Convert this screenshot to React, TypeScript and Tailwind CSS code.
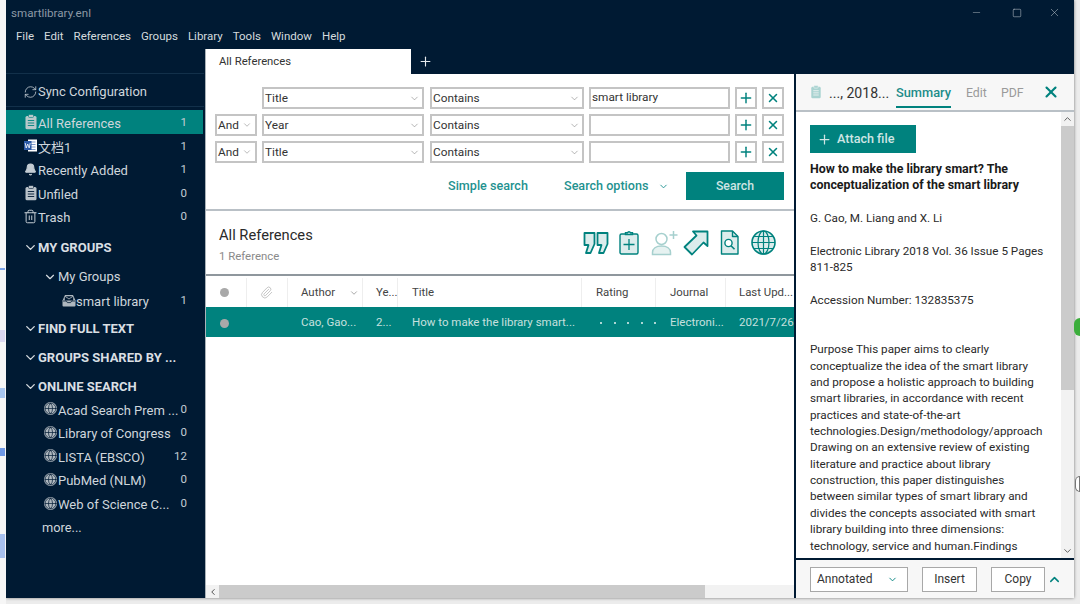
import React from "react";
import { RefreshCw, Bell, Trash2, Globe, ChevronDown, ChevronUp, ChevronLeft, Plus, X, Paperclip, Minus, Square } from "lucide-react";

const Clip = ({ c = "#b9c2c9", s = 14, line = "#001a33" }: { c?: string; s?: number; line?: string }) => (
  <svg width={s} height={s + 2} viewBox="0 0 14 16">
    <rect x="1.5" y="2" width="11" height="13.2" rx="1.5" fill={c} />
    <rect x="4.5" y="0.5" width="5" height="3" rx="1" fill={c} stroke={line} strokeWidth="0.6" />
    <path d="M3.8 6.5h6.4M3.8 9h6.4M3.8 11.5h6.4" stroke={line} strokeWidth="0.9" />
  </svg>
);

const WordIcon = () => (
  <svg width="13" height="13" viewBox="0 0 13 13">
    <rect x="4" y="0.5" width="9" height="12" fill="#fff" />
    <path d="M6.5 3h5M6.5 5.5h5M6.5 8h5M6.5 10.5h5" stroke="#6f8fc4" strokeWidth="0.9" />
    <rect x="0" y="2" width="7.5" height="9" fill="#2b5aa8" />
    <path d="M1.2 4l1 5 1.5-4 1.5 4 1-5" stroke="#fff" strokeWidth="0.8" fill="none" />
  </svg>
);

const TrayIcon = () => (
  <svg width="14" height="13" viewBox="0 0 14 13">
    <path d="M3 1h8l2.5 5.5V11.5a1 1 0 0 1-1 1h-11a1 1 0 0 1-1-1V6.5z" fill="#aeb7be" />
    <path d="M3 6.5V3l4 2.5L11 3v3.5" fill="#001a33" stroke="#001a33" strokeWidth="0.4" />
    <path d="M3.6 2.2h6.8L7 4.6z" fill="#001a33" />
    <path d="M1 7h3.4l1 1.6h3.2l1-1.6H13" fill="none" stroke="#001a33" strokeWidth="0.8" />
  </svg>
);

const Row = ({ icon, label, count, active, indent = 0 }: { icon?: React.ReactNode; label: string; count?: string; active?: boolean; indent?: number }) => (
  <div className={`flex items-center pr-[8px] ${active ? "bg-[#00827e] h-[24px]" : "h-[23.6px]"}`} style={{ paddingLeft: 17 + indent }}>
    <span className="w-[15px] flex justify-center shrink-0">{icon}</span>
    <span className="text-[#cfd6dc] text-[13px] whitespace-nowrap pt-[3px]">{label}</span>
    <span className="ml-auto pr-[8px] text-[#c3ccd3] text-[11.5px] pt-[1px]">{count}</span>
  </div>
);

const Head = ({ label, cls = "" }: { label: string; cls?: string }) => (
  <div className={`flex items-center h-[29px] pl-[17px] ${cls}`}>
    <ChevronDown size={15} strokeWidth={2.2} color="#d5dbe0" className="shrink-0" />
    <span className="text-[#d9dfe3] text-[13px] font-bold whitespace-nowrap">{label}</span>
  </div>
);

const G = () => (
  <span className="w-[13px] h-[13px] rounded-full bg-[#aeb7be] flex items-center justify-center">
    <Globe size={13} strokeWidth={1.3} color="#001a33" />
  </span>
);

const Select = ({ label, w, sm }: { label: string; w: string; sm?: boolean }) => (
  <div className={`${w} h-[22px] border-2 border-[#c4c4c4] flex items-center pl-[1px] text-[11.8px] text-[#333] shrink-0 bg-white`}>
    <span className="pt-[1px]">{label}</span>
    <ChevronDown size={sm ? 10 : 11} color="#777" strokeWidth={1.2} className={`ml-auto ${sm ? "mr-[3px]" : "mr-[2px]"}`} />
  </div>
);

const SearchRow = ({ first, field, value }: { first?: boolean; field: string; value?: string }) => (
  <div className="flex h-[22px] items-center mb-[5px]">
    {first ? <div className="w-[42px] shrink-0" /> : <Select label="And" w="w-[42px]" sm />}
    <div className="w-[5px] shrink-0" />
    <Select label={field} w="w-[162px]" />
    <div className="w-[6px] shrink-0" />
    <Select label="Contains" w="w-[154px]" />
    <div className="w-[5px] shrink-0" />
    <div className="w-[141px] h-[22px] border-2 border-[#c4c4c4] flex items-center text-[11.8px] text-[#333] shrink-0 pl-[1px]">{value}</div>
    <button className="ml-[5px] w-[22px] h-[22px] border-2 border-[#c4c4c4] flex items-center justify-center shrink-0">
      <Plus size={16} color="#00827e" strokeWidth={2.2} />
    </button>
    <button className="ml-[5px] w-[22px] h-[22px] border-2 border-[#c4c4c4] flex items-center justify-center shrink-0">
      <X size={14} color="#00827e" strokeWidth={2.6} />
    </button>
  </div>
);

const T = "#00827e";
const F = "#dcecec";
const ToolIcons = () => (
  <div className="flex items-center mr-[18px] h-[28px]">
    <svg width="26" height="24" viewBox="0 0 26 24" fill={F} stroke={T} strokeWidth="1.8" strokeLinejoin="round">
      <path d="M1.5 2h10v11l-4 9H3l2.5-8H1.5z" />
      <path d="M14.5 2h10v11l-4 9H16l2.5-8h-4z" />
    </svg>
    <svg className="ml-[10px]" width="20" height="25" viewBox="0 0 20 25" fill={F} stroke={T} strokeWidth="1.4">
      <rect x="1" y="4" width="18" height="20" rx="1.5" />
      <path d="M6.5 4.5V2.8h2a1.6 1.6 0 0 1 3 0h2v1.7z" />
      <path d="M10 9v11M4.5 14.5h11" fill="none" strokeWidth="1.3" />
    </svg>
    <svg className="ml-[12px]" width="28" height="26" viewBox="0 0 28 26" fill="none" stroke="#a6d0ce" strokeWidth="1.5">
      <circle cx="10.5" cy="9" r="5.5" />
      <path d="M1.5 24.5v-2c0-4 3.5-6.5 9-6.5s9 2.5 9 6.5v2z" fill="#e6f2f1" />
      <path d="M22.5 1v8M18.5 5h8" />
    </svg>
    <svg className="ml-[4px]" width="26" height="26" viewBox="0 0 26 26" fill={F} stroke={T} strokeWidth="1.8" strokeLinejoin="round">
      <path d="M10 1.5h14.5V16l-4-3.5L9 24.5 1.5 17 13.5 5.5z" />
    </svg>
    <svg className="ml-[11px]" width="19" height="25" viewBox="0 0 19 25" fill={F} stroke={T} strokeWidth="1.4" strokeLinejoin="round">
      <path d="M1.5 1h11l5.5 5.5V24H1.5z" />
      <path d="M12.5 1v5.5H18" fill="none" />
      <circle cx="8.5" cy="13" r="3.6" fill="#fff" />
      <path d="M11 15.7l3.5 3.6" strokeWidth="1.6" />
    </svg>
    <svg className="ml-[12px]" width="25" height="25" viewBox="0 0 25 25" fill={F} stroke={T} strokeWidth="1.2">
      <circle cx="12.5" cy="12.5" r="11.5" strokeWidth="1.6" />
      <ellipse cx="12.5" cy="12.5" rx="5.5" ry="11.5" fill="none" />
      <path d="M12.5 1v23M1 12.5h23M2.8 6.5h19.4M2.8 18.5h19.4" fill="none" />
    </svg>
  </div>
);

const Th = ({ w, children, border = true }: { w: string; children?: React.ReactNode; border?: boolean }) => (
  <div className={`${w} shrink-0 h-full flex items-center ${border ? "border-r border-[#eeeeee]" : ""}`}>{children}</div>
);

const Dot = () => <span className="w-[9px] h-[9px] rounded-full bg-[#a9a9a9] ml-[14px]" />;

const abstract = [
  "Purpose This paper aims to clearly",
  "conceptualize the idea of the smart library",
  "and propose a holistic approach to building",
  "smart libraries, in accordance with recent",
  "practices and state-of-the-art",
  "technologies.Design/methodology/approach",
  "Drawing on an extensive review of existing",
  "literature and practice about library",
  "construction, this paper distinguishes",
  "between similar types of smart library and",
  "divides the concepts associated with smart",
  "library building into three dimensions:",
  "technology, service and human.Findings",
];

export default function App() {
  return (
    <div className="relative w-[1080px] h-[604px] overflow-hidden bg-[#ececec]" style={{ fontFamily: 'Roboto, "Noto Sans CJK SC", sans-serif' }}>
      {/* background window fragments */}
      <div className="absolute left-0 top-0 w-[6px] h-[604px] bg-[#f6f6f6]">
        <div className="absolute left-0 top-[268px] w-[5px] h-[2px] bg-[#7aa2e8]" />
        <div className="absolute left-0 top-[330px] w-[5px] h-[12px] bg-[#dcd8f0]" />
        <div className="absolute left-0 top-[388px] w-[5px] h-[10px] bg-[#a8c6f0]" />
        <div className="absolute left-0 top-[448px] w-[5px] h-[8px] bg-[#6f98e6]" />
        <div className="absolute left-0 top-[534px] w-[5px] h-[24px] bg-[#a8c0ee]" />
      </div>
      <div className="absolute right-0 top-[318px] w-[6px] h-[18px] rounded-l-full bg-[#3cae3c]" />
      <div className="absolute right-0 top-[476px] w-[5px] h-[16px] rounded-l-full border border-[#777] bg-white" />

      {/* window */}
      <div className="ml-[6px] w-[1068px] h-[598px] bg-[#001a33] flex flex-col shadow-[0_0_3px_rgba(0,0,0,0.5)]">
        <div className="h-[25px] shrink-0 flex items-center pl-[5px] text-[11.6px] text-[#8c99a6]">
          <span className="pt-[3px]">smartlibrary.enl</span>
          <div className="ml-auto flex items-center text-[#bcc5cd]">
            <Minus size={11} strokeWidth={1} />
            <Square size={10} strokeWidth={1.3} className="ml-[30px]" />
            <X size={13} strokeWidth={1} className="ml-[26px] mr-[13px]" />
          </div>
        </div>
        <div className="h-[24px] shrink-0 flex items-center pl-[10px] gap-[10px] text-[11.5px] text-[#d4dade]">
          {["File", "Edit", "References", "Groups", "Library", "Tools", "Window", "Help"].map((m) => (
            <span key={m}>{m}</span>
          ))}
        </div>
        <div className="flex-1 flex min-h-0">
          {/* sidebar */}
          <aside className="w-[199px] shrink-0 flex flex-col">
            <div className="h-[25px] shrink-0 border-b border-[#12304a] mr-[1px]" />
            <div className="h-[33px] shrink-0 border-b border-[#12304a] mr-[1px] flex items-center pl-[17px] pt-[4px]">
              <RefreshCw size={14} color="#c3ccd3" strokeWidth={1.4} className="w-[15px]" />
              <span className="text-[13px] text-[#cfd6dc]">Sync Configuration</span>
            </div>
            <div className="h-[3px] shrink-0" />
            <div className="mr-[2px]">
              <Row icon={<Clip c="#b9c9cb" line="#00827e" />} label="All References" count="1" active />
            </div>
            <div className="mr-[2px]">
              <Row icon={<WordIcon />} label="文档1" count="1" />
              <Row icon={<Bell size={13} color="#c3ccd3" fill="#c3ccd3" />} label="Recently Added" count="1" />
              <Row icon={<Clip />} label="Unfiled" count="0" />
              <Row icon={<Trash2 size={15} color="#c3ccd3" strokeWidth={1.6} />} label="Trash" count="0" />
              <Head label="MY GROUPS" cls="mt-[5px]" />
              <div className="flex items-center h-[29px] pl-[37px]">
                <ChevronDown size={14} strokeWidth={2} color="#d5dbe0" />
                <span className="ml-[1px] text-[13px] text-[#cfd6dc]">My Groups</span>
              </div>
              <div className="-mt-[3px]">
                <Row icon={<TrayIcon />} label="smart library" count="1" indent={38} />
              </div>
              <Head label="FIND FULL TEXT" cls="mt-[2px]" />
              <Head label="GROUPS SHARED BY ..." />
              <Head label="ONLINE SEARCH" />
              <div className="-mt-[4px]">
                <Row icon={<G />} label="Acad Search Prem ..." count="0" indent={20} />
                <Row icon={<G />} label="Library of Congress" count="0" indent={20} />
                <Row icon={<G />} label="LISTA (EBSCO)" count="12" indent={20} />
                <Row icon={<G />} label="PubMed (NLM)" count="0" indent={20} />
                <Row icon={<G />} label="Web of Science C..." count="0" indent={20} />
              </div>
              <div className="pl-[36px] h-[24px] flex items-center text-[12.8px] text-[#cfd6dc] pt-[2px]">more...</div>
            </div>
          </aside>

          {/* centre */}
          <main className="w-[589px] shrink-0 flex flex-col border-l border-[#aab2b8] min-h-0">
            <div className="h-[25px] shrink-0 flex items-center">
              <div className="w-[205px] h-full bg-white flex items-center pl-[13px] pt-[2px] text-[11.3px] text-[#333]">All References</div>
              <Plus size={15} color="#e5e9ec" strokeWidth={1.8} className="ml-[7px]" />
            </div>
            <div className="flex-1 bg-white flex flex-col min-h-0">
              <div className="h-[137px] shrink-0 border-b-2 border-[#b9c0c6] pt-[13px] pl-[9px]">
                <SearchRow first field="Title" value="smart library" />
                <SearchRow field="Year" />
                <SearchRow field="Title" />
                <div className="flex items-center h-[28px] mt-[9px] text-[12.6px] font-medium text-[#1f9290]">
                  <span className="ml-[233px] w-[116px] whitespace-nowrap pt-[1px]">Simple search</span>
                  <span className="w-[94px] whitespace-nowrap pt-[1px]">Search options</span>
                  <ChevronDown size={11} strokeWidth={2} />
                  <button className="ml-[17px] w-[98px] h-[28px] bg-[#00827e] text-[#cfe5e4] text-[12.3px] font-medium pt-[1px]">Search</button>
                </div>
              </div>
              <div className="h-[65px] shrink-0 border-b-2 border-[#8f979d] flex items-start pl-[13px]">
                <div className="pt-[14px]">
                  <div className="text-[14.7px] text-[#2a2a2a] leading-[20px]">All References</div>
                  <div className="text-[11.4px] text-[#8a8a8a] leading-[16px] mt-[3px]">1 Reference</div>
                </div>
                <div className="ml-auto self-stretch flex items-center"><ToolIcons /></div>
              </div>
              <div className="h-[31px] shrink-0 flex items-center text-[11.4px] text-[#444] pt-[2px]">
                <Th w="w-[41px]"><Dot /></Th>
                <Th w="w-[41px]"><Paperclip size={13} color="#bdbdbd" strokeWidth={1.6} className="ml-[13px]" /></Th>
                <Th w="w-[75px]"><span className="ml-[13px]">Author</span><ChevronDown size={10} color="#999" className="ml-auto mr-[3px]" /></Th>
                <Th w="w-[35px]"><span className="ml-[13px]">Ye...</span></Th>
                <Th w="w-[184px]"><span className="ml-[14px]">Title</span></Th>
                <Th w="w-[74px]"><span className="ml-[14px]">Rating</span></Th>
                <Th w="w-[70px]"><span className="ml-[14px]">Journal</span></Th>
                <Th w="w-[68px]" border={false}><span className="ml-[13px] whitespace-nowrap">Last Upd...</span></Th>
              </div>
              <div className="h-[30px] shrink-0 bg-[#00827e] flex items-center text-[11.5px] text-[#c7e0df] overflow-hidden pt-[2px]">
                <Th w="w-[41px]" border={false}><Dot /></Th>
                <Th w="w-[41px]" border={false} />
                <Th w="w-[75px]" border={false}><span className="ml-[13px]">Cao, Gao...</span></Th>
                <Th w="w-[35px]" border={false}><span className="ml-[13px]">2...</span></Th>
                <Th w="w-[184px]" border={false}><span className="ml-[14px] whitespace-nowrap">How to make the library smart...</span></Th>
                <Th w="w-[74px]" border={false}>
                  <span className="ml-[18px] flex gap-[11.5px]">
                    {[0, 1, 2, 3, 4].map((i) => <span key={i} className="w-[2px] h-[2px] rounded-full bg-[#e6f2f2]" />)}
                  </span>
                </Th>
                <Th w="w-[70px]" border={false}><span className="ml-[14px]">Electroni...</span></Th>
                <Th w="w-[68px]" border={false}><span className="ml-[13px] whitespace-nowrap">2021/7/26</span></Th>
              </div>
              <div className="flex-1" />
              <div className="h-[13px] shrink-0 bg-[#f2f2f2] flex">
                <div className="w-[13px] flex items-center justify-center"><ChevronLeft size={10} strokeWidth={2.4} color="#555" /></div>
                <div className="w-[486px] bg-[#cbcbcb]" />
              </div>
            </div>
          </main>

          <div className="w-[2px] shrink-0" />

          {/* right panel */}
          <section className="flex-1 flex flex-col min-h-0 pt-[25px]">
            <div className="h-[38px] shrink-0 bg-[#f7f7f7] border-b-2 border-[#b9c0c6] flex items-center pl-[14px]">
              <Clip c="#a9d3d1" s={12} line="#f7f7f7" />
              <span className="ml-[7px] w-[67px] text-[14.1px] text-[#333] whitespace-nowrap pt-[3px]">..., 2018...</span>
              <span className="self-start h-[34px] w-[55px] pt-[5px] flex items-center text-[12.8px] font-medium text-[#1b8c89] border-b-2 border-[#00827e] whitespace-nowrap">Summary</span>
              <span className="ml-[15px] w-[35px] text-[12.3px] text-[#9a9a9a] pt-[3px]">Edit</span>
              <span className="w-[41px] text-[12.3px] text-[#9a9a9a] pt-[3px]">PDF</span>
              <X size={18} color="#00827e" strokeWidth={2.8} />
            </div>
            <div className="flex-1 flex min-h-0 bg-white">
              <div className="flex-1 min-w-0 overflow-hidden pl-[14px] pt-[13px] text-[11.7px] leading-[16.36px] text-[#2a2a2a]">
                <button className="w-[106px] h-[28px] bg-[#00827e] flex items-center pl-[7px] text-[#cfe5e4] text-[12.6px] font-medium">
                  <Plus size={15} strokeWidth={2} /><span className="ml-[5px] pt-[1px]">Attach file</span>
                </button>
                <div className="font-bold text-[12.4px] mt-[8px] text-[#1a1a1a] whitespace-nowrap">How to make the library smart? The<br />conceptualization of the smart library</div>
                <div className="mt-[16.36px]">G. Cao, M. Liang and X. Li</div>
                <div className="mt-[16.36px] whitespace-nowrap">Electronic Library 2018 Vol. 36 Issue 5 Pages<br />811-825</div>
                <div className="mt-[16.36px]">Accession Number: 132835375</div>
                <div className="mt-[33px] whitespace-nowrap">
                  {abstract.map((l) => <div key={l}>{l}</div>)}
                </div>
              </div>
              <div className="w-[13px] shrink-0 bg-[#f2f2f2] flex flex-col items-center">
                <ChevronUp size={11} strokeWidth={2} color="#555" className="h-[14px]" />
                <div className="w-full h-[264px] bg-[#cbcbcb]" />
                <ChevronDown size={11} strokeWidth={2} color="#555" className="mt-auto h-[14px]" />
              </div>
            </div>
            <div className="h-[40px] shrink-0 bg-[#f7f7f7] border-t-2 border-[#001a33] flex items-center pl-[14px] text-[12px] text-[#333]">
              <div className="w-[98px] h-[25px] border border-[#a8a8a8] bg-white flex items-center pl-[6px]">
                Annotated<ChevronDown size={11} color="#00827e" strokeWidth={2} className="ml-auto mr-[9px]" />
              </div>
              <div className="ml-[14px] w-[55px] h-[25px] border border-[#a8a8a8] bg-white flex items-center justify-center">Insert</div>
              <div className="ml-[14px] w-[54px] h-[25px] border border-[#a8a8a8] bg-white flex items-center justify-center">Copy</div>
              <ChevronUp size={15} color="#00827e" strokeWidth={2.4} className="ml-[2px]" />
            </div>
          </section>
        </div>
      </div>
    </div>
  );
}
